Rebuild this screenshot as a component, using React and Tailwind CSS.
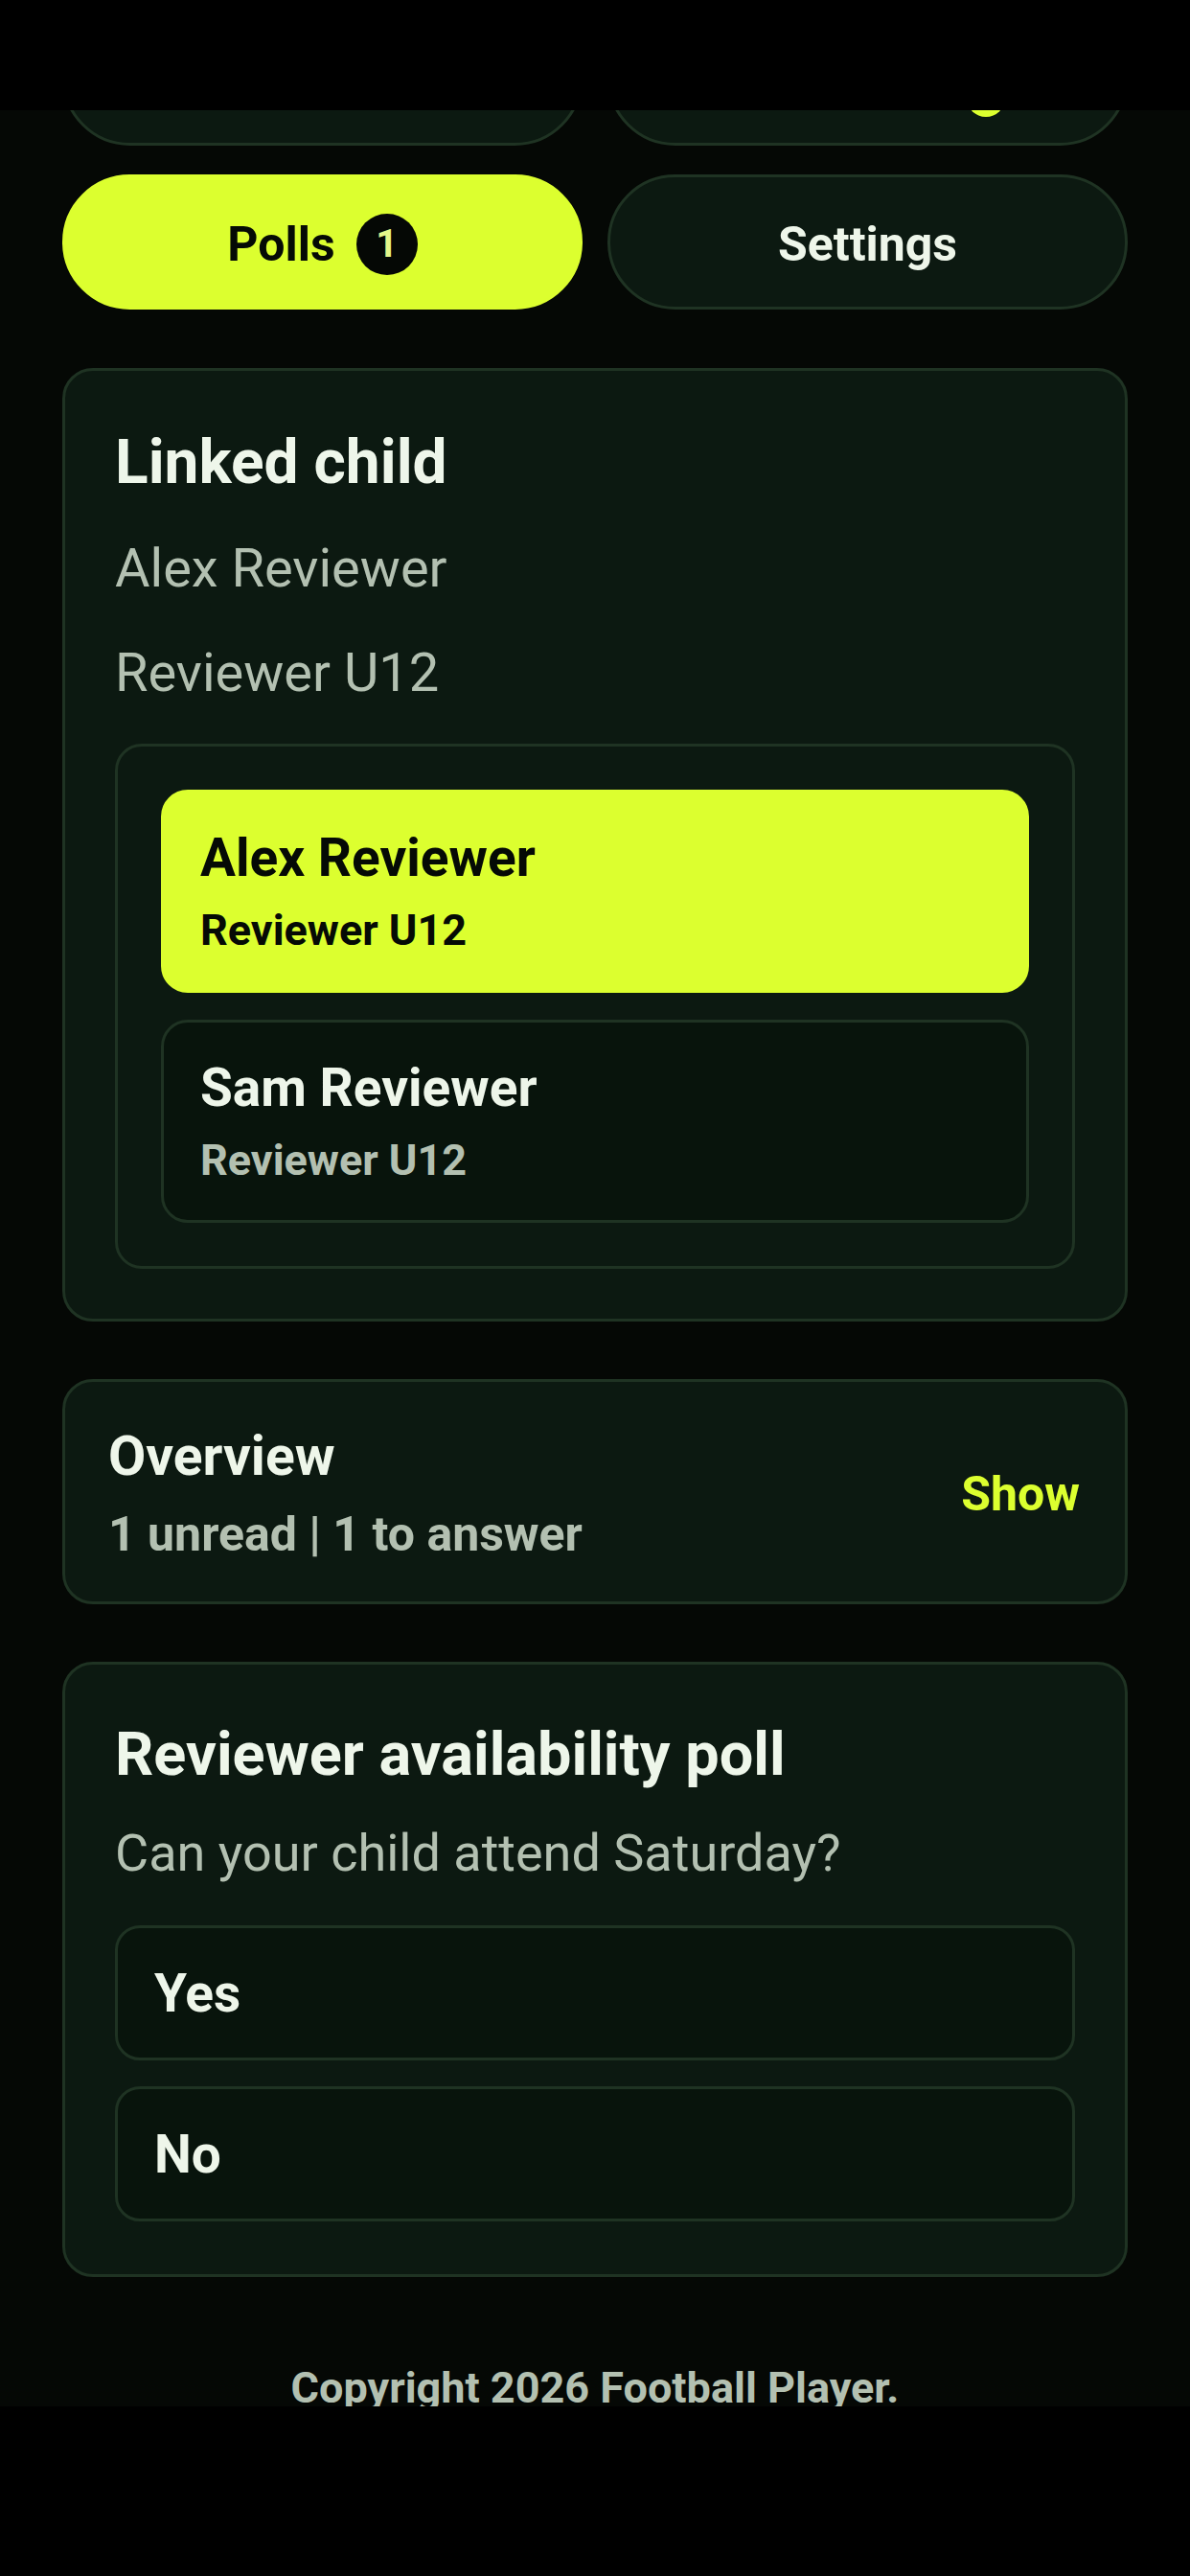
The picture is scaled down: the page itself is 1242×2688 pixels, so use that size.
import React from "react";

export default function App() {
  return (
    <div className="relative w-[1242px] h-[2688px] overflow-hidden bg-[#050805] font-['Roboto',sans-serif]">
      <div className="flex flex-col px-[65px] pt-[11px]">
        {/* Tab pills */}
        <div className="grid grid-cols-2 gap-x-[26px] gap-y-[30px]">
          <div className="h-[141px] rounded-full border-[3px] border-[#1f3323] bg-[#0c1911] flex items-center justify-center pt-[4px]">
            <span className="text-[50px] leading-[60px] font-bold text-[#eef6ea]">Home</span>
          </div>
          <div className="relative h-[141px] rounded-full border-[3px] border-[#1f3323] bg-[#0c1911] flex items-center justify-center pt-[4px]">
            <span className="text-[50px] leading-[60px] font-bold text-[#eef6ea]">Messages</span>
            <span className="absolute left-[372px] top-[68px] w-[40px] h-[40px] rounded-full bg-[#dcff2f]" />
          </div>
          <div className="h-[141px] rounded-full border-[3px] border-[#dcff2f] bg-[#dcff2f] flex items-center justify-center gap-[22px] pt-[4px]">
            <span className="text-[50px] leading-[60px] font-bold text-[#050a05]">Polls</span>
            <span className="w-[64px] h-[64px] rounded-full bg-[#050805] flex items-center justify-center text-[40px] leading-none font-bold text-[#e4f78a]">
              1
            </span>
          </div>
          <div className="h-[141px] rounded-full border-[3px] border-[#1f3323] bg-[#0c1911] flex items-center justify-center pt-[4px]">
            <span className="text-[50px] leading-[60px] font-bold text-[#eef6ea]">Settings</span>
          </div>
        </div>

        {/* Linked child card */}
        <div className="mt-[61px] rounded-[32px] border-[3px] border-[#1f3323] bg-[#0c1911] px-[52px] pt-[56px] pb-[52px] flex flex-col">
          <div className="text-[64px] leading-[80px] font-bold text-[#eef6ea]">Linked child</div>
          <div className="mt-[36px] text-[56px] leading-[68px] text-[#b3c0b1]">Alex Reviewer</div>
          <div className="mt-[41px] text-[56px] leading-[68px] text-[#b3c0b1]">Reviewer U12</div>
          <div className="mt-[40px] rounded-[28px] border-[3px] border-[#1f3323] p-[45px] flex flex-col gap-[28px]">
            <div className="h-[212px] rounded-[28px] border-[3px] border-[#dcff2f] bg-[#dcff2f] px-[38px] flex flex-col justify-center gap-[14px]">
              <div className="text-[55px] leading-[68px] font-bold text-[#050a05]">Alex Reviewer</div>
              <div className="text-[45px] leading-[56px] font-bold text-[#050a05]">Reviewer U12</div>
            </div>
            <div className="h-[212px] rounded-[28px] border-[3px] border-[#1f3323] bg-[#08140c] px-[38px] flex flex-col justify-center gap-[14px]">
              <div className="text-[55px] leading-[68px] font-bold text-[#eef6ea]">Sam Reviewer</div>
              <div className="text-[45px] leading-[56px] font-bold text-[#b3c0b1]">Reviewer U12</div>
            </div>
          </div>
        </div>

        {/* Overview card */}
        <div className="mt-[60px] h-[235px] rounded-[32px] border-[3px] border-[#1f3323] bg-[#0c1911] pl-[45px] pr-[47px] flex items-center justify-between">
          <div className="flex flex-col gap-[17px] pt-[4px]">
            <div className="text-[57px] leading-[68px] font-bold text-[#eef6ea]">Overview</div>
            <div className="text-[50px] leading-[60px] font-bold text-[#b3c0b1]">1 unread | 1 to answer</div>
          </div>
          <div className="text-[50px] leading-[60px] font-bold text-[#dcff2f] pt-[4px]">Show</div>
        </div>

        {/* Poll card */}
        <div className="mt-[60px] rounded-[32px] border-[3px] border-[#1f3323] bg-[#0c1911] px-[52px] pt-[55px] pb-[55px] flex flex-col">
          <div className="text-[63px] leading-[78px] font-bold text-[#eef6ea]">Reviewer availability poll</div>
          <div className="mt-[31px] text-[54px] leading-[66px] text-[#b3c0b1]">Can your child attend Saturday?</div>
          <div className="mt-[42px] h-[141px] rounded-[26px] border-[3px] border-[#1f3323] bg-[#08140c] px-[38px] flex items-center">
            <span className="text-[55px] leading-[66px] font-bold text-[#eef6ea]">Yes</span>
          </div>
          <div className="mt-[27px] h-[141px] rounded-[26px] border-[3px] border-[#1f3323] bg-[#08140c] px-[38px] flex items-center">
            <span className="text-[55px] leading-[66px] font-bold text-[#eef6ea]">No</span>
          </div>
        </div>

        {/* Footer */}
        <div className="mt-[89px] text-center text-[45px] leading-[54px] font-bold text-[#b3c0b1]">
          Copyright 2026 Football Player.
        </div>
      </div>

      {/* Status bar overlay */}
      <div className="absolute inset-x-0 top-0 h-[115px] bg-black" />
      {/* Navigation bar overlay */}
      <div className="absolute inset-x-0 bottom-0 h-[177px] bg-black" />
    </div>
  );
}
